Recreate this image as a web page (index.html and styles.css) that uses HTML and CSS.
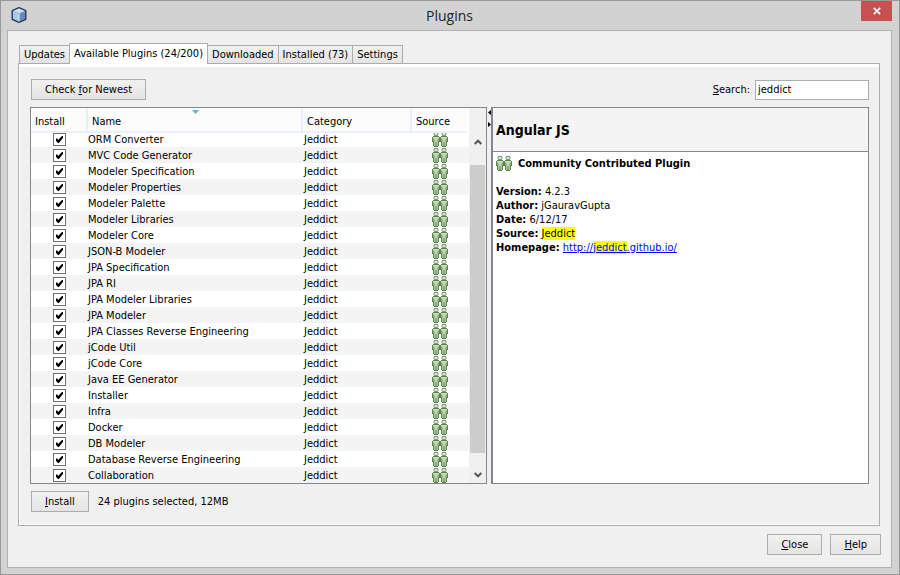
FILE: index.html
```html
<!DOCTYPE html>
<html lang="en">
<head>
<meta charset="utf-8">
<title>Plugins</title>
<link rel="stylesheet" href="styles.css">
</head>
<body>
<svg class="defs" aria-hidden="true">
  <defs>
    <linearGradient id="skin" x1="0" y1="0" x2="0" y2="1"><stop offset="0" stop-color="#cfe3c5"/><stop offset="1" stop-color="#a6cb97"/></linearGradient>
    <g id="person">
      <path d="M1 4h6v1h1v5H7v4H6v1H2v-1H1v-4H0V5h1z" fill="#5b8049"/>
      <path d="M1 5h6v4H6v5H4.500v-4h-1v4H2V9H1z" fill="url(#skin)"/>
      <path d="M2 6.500v3M6 6.500v3" stroke="#4a7038" stroke-width=".7"/>
      <path d="M2 0h4v1h.5v2H6v1H2V3h-.5V1H2z" fill="#7c9c6c"/>
      <path d="M2.500 1h3v2h-3z" fill="#d9e8d2"/>
    </g>
    <symbol id="people" viewBox="0 0 16 15"><use href="#person"/><use href="#person" x="8"/></symbol>
  </defs>
</svg>
<div class="window">
  <header class="titlebar">
    <svg class="app-icon" viewBox="0 0 16 16" width="16" height="16" aria-hidden="true">
      <path d="M8 .7l6.800 2.900v8.800L8 15.300l-6.800-2.900V3.600z" fill="#7da3d3" stroke="#26335c" stroke-width="1.300" stroke-linejoin="round"/>
      <path d="M8 1.600l5.700 2.300L8 6.300 2.300 3.900z" fill="#cfe3df"/>
      <path d="M2 4.400l5.600 2.300v7.500L2 11.800z" fill="#a9c8ee"/>
      <path d="M14 4.400L8.400 6.700v7.500l5.600-2.400z" fill="#6488be"/>
      <path d="M8 6.500v8" stroke="#e2f0fb" stroke-width="1"/>
    </svg>
    <h1>Plugins</h1>
    <button class="window-close" aria-label="Close window"><svg viewBox="0 0 8 8" width="8" height="8"><path d="M.8.8l6.400 6.400M7.200.8L.8 7.200" stroke="#fff" stroke-width="1.700"/></svg></button>
  </header>
  <main class="client">
    <nav class="tabs" role="tablist">
      <button role="tab">Updates</button><button role="tab" class="active" aria-selected="true">Available Plugins (24/200)</button><button role="tab">Downloaded</button><button role="tab">Installed (73)</button><button role="tab">Settings</button>
    </nav>
    <section class="tab-panel">
      <div class="toolbar">
        <button class="btn">Check <u>f</u>or Newest</button>
        <div class="search"><label for="search"><u>S</u>earch:</label><input id="search" type="text" value="jeddict"></div>
      </div>
      <div class="split">
        <div class="list">
          <table>
            <colgroup><col class="c-install"><col><col class="c-category"><col class="c-source"></colgroup>
            <thead><tr><th><div>Install</div></th><th><div>Name<svg class="sort" viewBox="0 0 7 4" width="7" height="4"><path d="M0 0h7L3.500 4z" fill="#6cb0d2"/></svg></div></th><th><div>Category</div></th><th><div class="last">Source</div></th></tr></thead>
            <tbody>
              <tr><td><input type="checkbox" checked aria-label="ORM Converter"></td><td>ORM Converter</td><td>Jeddict</td><td><svg class="people"><use href="#people"/></svg></td></tr>
              <tr><td><input type="checkbox" checked aria-label="MVC Code Generator"></td><td>MVC Code Generator</td><td>Jeddict</td><td><svg class="people"><use href="#people"/></svg></td></tr>
              <tr><td><input type="checkbox" checked aria-label="Modeler Specification"></td><td>Modeler Specification</td><td>Jeddict</td><td><svg class="people"><use href="#people"/></svg></td></tr>
              <tr><td><input type="checkbox" checked aria-label="Modeler Properties"></td><td>Modeler Properties</td><td>Jeddict</td><td><svg class="people"><use href="#people"/></svg></td></tr>
              <tr><td><input type="checkbox" checked aria-label="Modeler Palette"></td><td>Modeler Palette</td><td>Jeddict</td><td><svg class="people"><use href="#people"/></svg></td></tr>
              <tr><td><input type="checkbox" checked aria-label="Modeler Libraries"></td><td>Modeler Libraries</td><td>Jeddict</td><td><svg class="people"><use href="#people"/></svg></td></tr>
              <tr><td><input type="checkbox" checked aria-label="Modeler Core"></td><td>Modeler Core</td><td>Jeddict</td><td><svg class="people"><use href="#people"/></svg></td></tr>
              <tr><td><input type="checkbox" checked aria-label="JSON-B Modeler"></td><td>JSON-B Modeler</td><td>Jeddict</td><td><svg class="people"><use href="#people"/></svg></td></tr>
              <tr><td><input type="checkbox" checked aria-label="JPA Specification"></td><td>JPA Specification</td><td>Jeddict</td><td><svg class="people"><use href="#people"/></svg></td></tr>
              <tr><td><input type="checkbox" checked aria-label="JPA RI"></td><td>JPA RI</td><td>Jeddict</td><td><svg class="people"><use href="#people"/></svg></td></tr>
              <tr><td><input type="checkbox" checked aria-label="JPA Modeler Libraries"></td><td>JPA Modeler Libraries</td><td>Jeddict</td><td><svg class="people"><use href="#people"/></svg></td></tr>
              <tr><td><input type="checkbox" checked aria-label="JPA Modeler"></td><td>JPA Modeler</td><td>Jeddict</td><td><svg class="people"><use href="#people"/></svg></td></tr>
              <tr><td><input type="checkbox" checked aria-label="JPA Classes Reverse Engineering"></td><td>JPA Classes Reverse Engineering</td><td>Jeddict</td><td><svg class="people"><use href="#people"/></svg></td></tr>
              <tr><td><input type="checkbox" checked aria-label="jCode Util"></td><td>jCode Util</td><td>Jeddict</td><td><svg class="people"><use href="#people"/></svg></td></tr>
              <tr><td><input type="checkbox" checked aria-label="jCode Core"></td><td>jCode Core</td><td>Jeddict</td><td><svg class="people"><use href="#people"/></svg></td></tr>
              <tr><td><input type="checkbox" checked aria-label="Java EE Generator"></td><td>Java EE Generator</td><td>Jeddict</td><td><svg class="people"><use href="#people"/></svg></td></tr>
              <tr><td><input type="checkbox" checked aria-label="Installer"></td><td>Installer</td><td>Jeddict</td><td><svg class="people"><use href="#people"/></svg></td></tr>
              <tr><td><input type="checkbox" checked aria-label="Infra"></td><td>Infra</td><td>Jeddict</td><td><svg class="people"><use href="#people"/></svg></td></tr>
              <tr><td><input type="checkbox" checked aria-label="Docker"></td><td>Docker</td><td>Jeddict</td><td><svg class="people"><use href="#people"/></svg></td></tr>
              <tr><td><input type="checkbox" checked aria-label="DB Modeler"></td><td>DB Modeler</td><td>Jeddict</td><td><svg class="people"><use href="#people"/></svg></td></tr>
              <tr><td><input type="checkbox" checked aria-label="Database Reverse Engineering"></td><td>Database Reverse Engineering</td><td>Jeddict</td><td><svg class="people"><use href="#people"/></svg></td></tr>
              <tr><td><input type="checkbox" checked aria-label="Collaboration"></td><td>Collaboration</td><td>Jeddict</td><td><svg class="people"><use href="#people"/></svg></td></tr>
            </tbody>
          </table>
          <div class="scrollbar" aria-hidden="true">
            <svg viewBox="0 0 8 6" width="8" height="6"><path d="M.7 5L4 1.700 7.300 5" fill="none" stroke="#555" stroke-width="2"/></svg>
            <div class="track"><div class="thumb"></div></div>
            <svg viewBox="0 0 8 6" width="8" height="6"><path d="M.7 1L4 4.300 7.300 1" fill="none" stroke="#555" stroke-width="2"/></svg>
          </div>
        </div>
        <div class="divider" aria-hidden="true">
          <svg viewBox="0 0 3 5" width="3" height="5"><path d="M3 0v5L0 2.500z"/></svg>
          <svg viewBox="0 0 3 5" width="3" height="5"><path d="M0 0v5l3-2.500z"/></svg>
        </div>
        <article class="details">
          <h2>Angular JS</h2>
          <div class="details-body">
            <h3><svg class="people"><use href="#people"/></svg>Community Contributed Plugin</h3>
            <p><b>Version:</b> 4.2.3</p>
            <p><b>Author:</b> jGauravGupta</p>
            <p><b>Date:</b> 6/12/17</p>
            <p><b>Source:</b> <mark>Jeddict</mark></p>
            <p><b>Homepage:</b> <a href="http://jeddict.github.io/">http://<mark>jeddict</mark>.github.io/</a></p>
          </div>
        </article>
      </div>
      <div class="status"><button class="btn"><u>I</u>nstall</button><span>24 plugins selected, 12MB</span></div>
    </section>
    <footer class="actions"><button class="btn"><u>C</u>lose</button><button class="btn"><u>H</u>elp</button></footer>
  </main>
</div>
</body>
</html>
```
FILE: styles.css
```css
* { box-sizing: border-box; }
body {
  margin: 0;
  font: 11px/14px "DejaVu Sans Condensed", "Noto Sans", sans-serif;
  color: #000;
}
button, input { font: inherit; color: inherit; margin: 0; }
h1, h2, h3, p { margin: 0; }
.defs { position: absolute; width: 0; height: 0; }

.window {
  min-height: 100vh;
  padding: 0 7px 6px 6px;
  border: 1px solid #999;
  background: #d2d2d2;
}
.titlebar {
  display: grid;
  grid-template-columns: 46px 1fr 46px;
  height: 29px;
}
.app-icon { margin: 6px 0 0 4px; }
.titlebar h1 {
  font: 14px/30px "Open Sans", sans-serif;
  color: #222;
  text-align: center;
}
.window-close {
  display: flex;
  align-items: center;
  justify-content: center;
  width: 31px;
  height: 20px;
  padding: 0;
  justify-self: end;
  border: 0;
  background: #c75050;
}

.client {
  padding: 12px 11px 12px 10px;
  border: 1px solid #b2b2b2;
  background: #f0f0f0;
}
.tabs {
  display: flex;
  align-items: flex-end;
  height: 21px;
  margin-bottom: -1px;
  padding-left: 1px;
}
.tabs button {
  height: 19px;
  margin-right: -1px;
  padding: 0 4px;
  border: 1px solid #acacac;
  background: linear-gradient(#f1f1f1, #e4e4e4);
  white-space: nowrap;
}
.tabs .active {
  position: relative;
  height: 21px;
  padding: 0 4px 1px;
  border-bottom: 0;
  background: #fff;
}
.tab-panel {
  padding: 12px 10px 13px 11px;
  border: 1px solid #acacac;
  box-shadow: inset 0 3px #fff, inset 1px -1px #fff;
}
.toolbar {
  display: flex;
  justify-content: space-between;
  padding: 3px 0 7px 1px;
}
.btn {
  height: 21px;
  padding: 0 13px;
  border: 1px solid #acacac;
  background: linear-gradient(#f1f1f1, #e4e4e4);
}
.search { display: flex; align-items: center; gap: 5px; }
.search input {
  width: 114px;
  height: 20px;
  padding: 0 2px;
  border: 1px solid #abadb3;
  background: #fff;
}

.split {
  display: grid;
  grid-template-columns: 457fr 4px 378fr;
}
.list { display: flex; border: 1px solid #828790; background: #fff; }
table { flex: 1; table-layout: fixed; border-collapse: collapse; }
.c-install { width: 57px; }
.c-category { width: 109px; }
.c-source { width: 57px; }
th { height: 23px; padding: 0; font-weight: normal; text-align: left; vertical-align: top; }
/* The header overlaps the top of the scrolled rows by two pixels. */
th div {
  position: relative;
  height: 25px;
  margin-bottom: -2px;
  padding: 7px 4px 0;
  border: solid #ebf0f8;
  border-width: 0 2px 2px 0;
  background: #fcfcfc;
}
th .last { margin-right: 2px; border-right-width: 0; }
.sort { position: absolute; top: 2px; left: 49%; }
td { height: 16px; padding: 1px 1px 0; line-height: 15px; white-space: nowrap; }
tbody tr:nth-child(even) { background: #f4f4f4; }
td:first-child { padding: 0; }
td:nth-child(2) { padding-left: 0; }
td:last-child { padding: 0 1px 0 0; }
td input {
  display: block;
  appearance: none;
  width: 13px;
  height: 13px;
  margin: 2px auto 1px;
  border: 1px solid #707070;
  background: #fff;
}
td input:checked::before {
  content: "";
  display: block;
  height: 11px;
  background: #000;
  clip-path: polygon(2px 5px, 3px 4px, 4px 6px, 8px 2px, 9px 2px, 9px 4px, 5px 9px, 4px 9px, 2px 7px);
}
.people { display: block; width: 16px; height: 15px; }
td .people { margin: 0 auto; }

.scrollbar {
  display: flex;
  flex-direction: column;
  align-items: center;
  width: 17px;
  padding: 31px 1px 5px;
  background: #f0f0f0;
}
.track { flex: 1; width: 15px; margin: 20px 0 19px; }
.thumb { height: 100%; background: #cdcdcd; }

.divider { display: flex; flex-direction: column; align-items: center; gap: 7px; padding-top: 3px; }
.details { border: 1px solid #828790; border-left-width: 2px; background: #fff; }
.details h2 {
  height: 44px;
  padding-left: 3px;
  border-bottom: 1px solid #888;
  background: #f4f4f4;
  font-size: 14px;
  line-height: 44px;
}
.details-body { padding: 4px 3px; }
.details h3 { display: flex; gap: 6px; margin-bottom: 14px; font-size: 11px; line-height: 15px; }
mark { background: #ff0; color: inherit; }
a { color: #00f; }

.status { display: flex; align-items: center; gap: 9px; padding: 7px 0 0 1px; }
.actions { display: flex; justify-content: flex-end; gap: 8px; margin-right: -1px; padding-top: 8px; }
```
